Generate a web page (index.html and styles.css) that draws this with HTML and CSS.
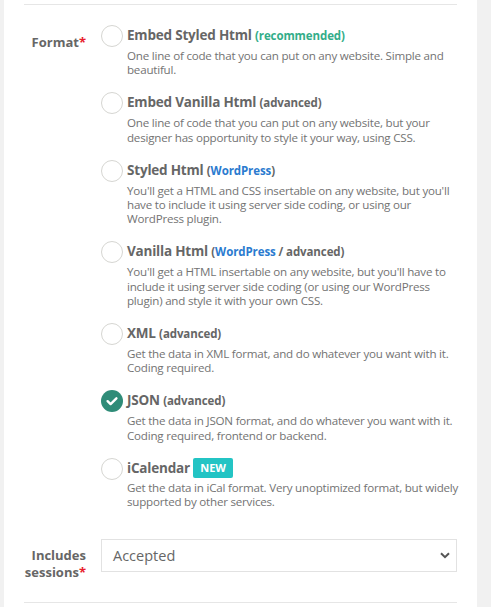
FILE: index.html
```html
<!DOCTYPE html>
<html>
<head>
<meta charset="utf-8">
<link rel="stylesheet" href="styles.css">
</head>
<body>
<div class="panel">
  <div class="rule"></div>
  <div class="field format-field">
    <div class="label">Format<span class="req">*</span></div>
    <div class="options">
      <div class="option">
        <span class="radio"></span>
        <div class="text">
          <div class="title">Embed Styled Html <span class="note green">(recommended)</span></div>
          <div class="desc">One line of code that you can put on any website. Simple and beautiful.</div>
        </div>
      </div>
      <div class="option">
        <span class="radio"></span>
        <div class="text">
          <div class="title">Embed Vanilla Html <span class="note">(advanced)</span></div>
          <div class="desc">One line of code that you can put on any website, but your designer has opportunity to style it your way, using CSS.</div>
        </div>
      </div>
      <div class="option">
        <span class="radio"></span>
        <div class="text">
          <div class="title">Styled Html <span class="note">(<span class="blue">WordPress</span>)</span></div>
          <div class="desc">You'll get a HTML and CSS insertable on any website, but you'll have to include it using server side coding, or using our WordPress plugin.</div>
        </div>
      </div>
      <div class="option">
        <span class="radio"></span>
        <div class="text">
          <div class="title">Vanilla Html <span class="note">(<span class="blue">WordPress</span> / advanced)</span></div>
          <div class="desc">You'll get a HTML insertable on any website, but you'll have to include it using server side coding (or using our WordPress plugin) and style it with your own CSS.</div>
        </div>
      </div>
      <div class="option">
        <span class="radio"></span>
        <div class="text">
          <div class="title">XML <span class="note">(advanced)</span></div>
          <div class="desc">Get the data in XML format, and do whatever you want with it. Coding required.</div>
        </div>
      </div>
      <div class="option">
        <span class="radio checked">
          <svg width="22" height="22" viewBox="0 0 22 22"><path d="M6.6 11.2 L9.6 14.1 L15.4 8.3" fill="none" stroke="#fff" stroke-width="2.4" stroke-linecap="round" stroke-linejoin="round"/></svg>
        </span>
        <div class="text">
          <div class="title">JSON <span class="note">(advanced)</span></div>
          <div class="desc">Get the data in JSON format, and do whatever you want with it. Coding required, frontend or backend.</div>
        </div>
      </div>
      <div class="option">
        <span class="radio"></span>
        <div class="text">
          <div class="title">iCalendar <span class="badge">NEW</span></div>
          <div class="desc">Get the data in iCal format. Very unoptimized format, but widely supported by other services.</div>
        </div>
      </div>
    </div>
  </div>
  <div class="field session-field">
    <div class="label">Includes sessions<span class="req">*</span></div>
    <div class="select">
      <span>Accepted</span>
      <svg width="10" height="7" viewBox="0 0 10 7"><path d="M1 1.2 L5 5.2 L9 1.2" fill="none" stroke="#555" stroke-width="2"/></svg>
    </div>
  </div>
  <div class="rule bottom"></div>
</div>
</body>
</html>
```

FILE: styles.css
```css
html, body {
  margin: 0;
  padding: 0;
}
body {
  background: #f1f1f1;
  font-family: "Open Sans", "DejaVu Sans", sans-serif;
  color: #666;
}
.panel {
  margin-left: 4px;
  width: 433px;
  min-height: 607px;
  background: #fff;
  padding: 4px 20px 0 20px;
}
.rule {
  height: 1px;
  background: #e6e6e6;
}
.field {
  display: grid;
  grid-template-columns: 64px 1fr;
  column-gap: 13px;
  align-items: start;
}
.label {
  text-align: right;
  font-weight: 700;
  font-size: 13px;
  line-height: 17px;
  color: #666;
  padding-right: 2px;
}
.req {
  color: #e8202a;
}
.format-field {
  padding-top: 20px;
}
.format-field .label {
  margin-top: 9px;
}
.options {
  display: flex;
  flex-direction: column;
  gap: 14.5px;
}
.option {
  display: flex;
  gap: 4px;
  align-items: flex-start;
}
.radio {
  flex: 0 0 auto;
  width: 22px;
  height: 22px;
  box-sizing: border-box;
  border: 1.5px solid #d6d6d2;
  border-radius: 50%;
  background: #fff;
  display: flex;
}
.radio.checked {
  border: none;
  background: #2f8c78;
}
.text {
  flex: 1;
}
.title {
  font-size: 13.5px;
  letter-spacing: -0.2px;
  font-weight: 700;
  line-height: 20px;
  color: #666;
}
.note {
  font-size: 11.5px;
  letter-spacing: -0.1px;
}
.green {
  color: #33ad89;
}
.blue {
  color: #2b7bcf;
}
.badge {
  display: inline-block;
  background: #23c4c4;
  color: #fff;
  font-size: 11px;
  font-weight: 700;
  line-height: 20px;
  padding: 0 7px;
  border-radius: 2px;
  margin-left: 0;
  vertical-align: top;
  letter-spacing: 0;
}
.desc {
  margin-top: 3px;
  margin-right: -6px;
  font-size: 11.6px;
  letter-spacing: -0.22px;
  line-height: 14.4px;
  color: #737373;
}
.session-field {
  margin-top: 29px;
}
.session-field .label {
  margin-top: 8px;
}
.select {
  height: 33px;
  box-sizing: border-box;
  border: 1px solid #e2e2e2;
  display: flex;
  align-items: center;
  justify-content: space-between;
  padding: 0 6px 0 11px;
  font-size: 14.5px;
  color: #666;
}
.rule.bottom {
  margin-top: 21px;
}
```
